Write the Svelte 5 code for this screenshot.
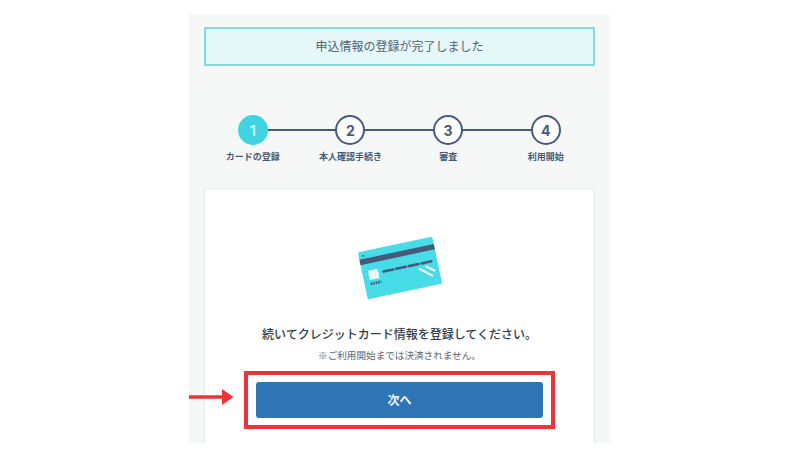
<script lang="ts">
  const steps = ["カードの登録", "本人確認手続き", "審査", "利用開始"];
  const current = 0;
</script>

<main class="panel">
  <p class="banner">申込情報の登録が完了しました</p>

  <ol class="steps">
    {#each steps as label, i}
      <li class="step" class:active={i === current}>
        <span class="num">{i + 1}</span>
        <span class="label">{label}</span>
      </li>
    {/each}
  </ol>

  <section class="card">
    <svg class="illust" width="100" height="76" viewBox="0 0 100 76" aria-hidden="true">
      <g transform="translate(50 38) rotate(-12)">
        <rect x="-38" y="-24" width="76" height="48" rx="2" fill="#48dbe8" />
        <rect x="-38" y="-16.5" width="76" height="5.5" fill="#465a7c" />
        <circle cx="-33.5" cy="-19.5" r="1" fill="#465a7c" />
        <rect x="-32" y="-4" width="10" height="9.5" fill="#e9f4f6" />
        <path d="M-17 0H-7M-4 0H6M9 0H19M22 0H32" stroke="#465a7c" stroke-width="2.6" stroke-linecap="round" />
        <path d="M-32 9.5H-21" stroke="#465a7c" stroke-width="2.8" stroke-dasharray="1.6 1" />
        <path d="M19 5L30 14M26 4L33 9.5" stroke="#e9f4f6" stroke-width="2.2" stroke-linecap="round" />
      </g>
    </svg>
    <h2>続いてクレジットカード情報を登録してください。</h2>
    <p class="note">※ご利用開始までは決済されません。</p>
    <div class="action">
      <button type="button">次へ</button>
      <span class="highlight"></span>
      <svg class="arrow" width="46" height="18" viewBox="0 0 46 18" aria-hidden="true">
        <path d="M0 7.3H34V1L45.5 9 34 17V10.7H0Z" fill="#ee3438" />
      </svg>
    </div>
  </section>
</main>

<style>
  :global(body) {
    background: #fff;
  }

  .panel {
    box-sizing: border-box;
    width: 421px;
    height: 429px;
    margin: 14px 0 0 189px;
    padding: 13px 15px 0;
    overflow: hidden;
    background: #f6f8f8;
    font-family: "Noto Sans CJK JP", "Noto Sans", sans-serif;
    color: #3f4d63;
  }

  .banner {
    box-sizing: border-box;
    width: 391px;
    height: 39px;
    margin: 0;
    padding-bottom: 3px;
    display: flex;
    align-items: center;
    justify-content: center;
    background: #e5f7f8;
    border: 2px solid #7fdce4;
    font-size: 12px;
    color: #55636f;
  }

  .steps {
    display: grid;
    grid-template-columns: repeat(4, 97.67px);
    margin: 49px 0 0;
    padding: 0;
    list-style: none;
  }

  .step {
    position: relative;
    display: flex;
    flex-direction: column;
    align-items: center;
  }

  .step:not(:last-child)::after {
    content: "";
    position: absolute;
    top: 14px;
    left: 50%;
    width: 98px;
    height: 2px;
    background: #465a7c;
  }

  .num {
    position: relative;
    z-index: 1;
    box-sizing: border-box;
    width: 30px;
    height: 30px;
    display: flex;
    align-items: center;
    justify-content: center;
    border: 2px solid #465a7c;
    border-radius: 50%;
    background: #fff;
    font-family: Inter, "Noto Sans", sans-serif;
    font-size: 14px;
    font-weight: 700;
    color: #465a7c;
  }

  .step.active .num {
    background: #41d3e2;
    border-color: #41d3e2;
    color: #d8f6fa;
  }

  .label {
    margin-top: 5px;
    font-size: 9px;
    line-height: 13px;
    font-weight: 700;
    color: #4a5a72;
    white-space: nowrap;
  }

  .card {
    box-sizing: border-box;
    width: 391px;
    height: 271px;
    margin-top: 25px;
    display: flex;
    flex-direction: column;
    align-items: center;
    padding-top: 41px;
    background: #fff;
    border: 1px solid #e6e9ea;
    border-radius: 4px;
  }

  .illust {
    display: block;
  }

  h2 {
    margin: 19px 0 0;
    font-size: 12px;
    line-height: 18px;
    font-weight: 500;
    color: #333c48;
  }

  .note {
    margin: 5px 0 0;
    font-size: 9.6px;
    line-height: 14px;
    color: #5c6670;
  }

  .action {
    position: relative;
    width: 287px;
    margin-top: 20px;
  }

  button {
    display: block;
    width: 100%;
    height: 36px;
    padding: 0 0 2px;
    border: 0;
    border-radius: 3px;
    background: #2f74b5;
    color: #eef5fb;
    font: inherit;
    font-size: 12px;
    font-weight: 700;
  }

  .highlight {
    position: absolute;
    inset: -11px -12px;
    border: 4px solid #ee3438;
    pointer-events: none;
  }

  .arrow {
    position: absolute;
    left: -68px;
    top: 6px;
  }
</style>
